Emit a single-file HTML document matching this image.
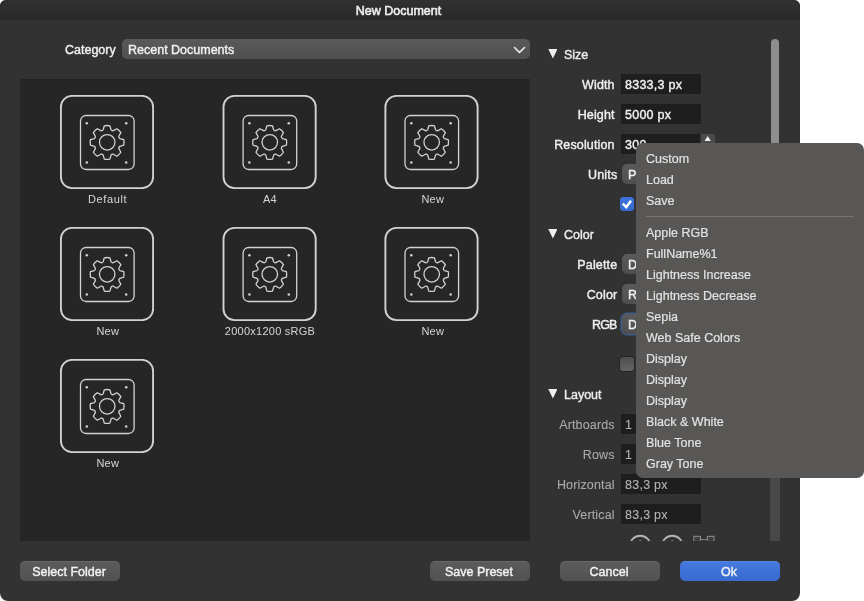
<!DOCTYPE html>
<html><head><meta charset="utf-8"><title>New Document</title>
<style>
*{box-sizing:border-box;margin:0;padding:0}
html,body{width:864px;height:601px;background:#fff;overflow:hidden}
body{position:relative;font-family:"Liberation Sans",sans-serif;font-size:12px;color:#e6e6e6;-webkit-font-smoothing:antialiased;-webkit-text-stroke:.4px currentColor}
.abs{position:absolute}
#win{will-change:transform;position:absolute;left:0;top:0;width:800px;height:601px;background:#323232;border-radius:6px 6px 8px 8px;overflow:hidden}
#title{position:absolute;left:0;top:0;width:800px;height:20px;background:linear-gradient(#313131,#282828);text-align:center;font-weight:normal;font-size:12.5px;line-height:23px;color:#ececec;-webkit-text-stroke:.6px;padding-right:3px}
.lbl{position:absolute;white-space:nowrap;line-height:22px;height:20px;font-size:12.5px;color:#f0f0f0}
.r{text-align:right;width:200px;margin-left:-.3px;letter-spacing:.15px}
.dim{color:#a9a9a9;-webkit-text-stroke:.1px}
.field{position:absolute;background:#1e1e1e;height:20px;line-height:22px;padding-left:4px;font-size:12.5px;color:#f0f0f0;white-space:nowrap;overflow:hidden;letter-spacing:.25px}
.dimf{color:#b4b4b4;-webkit-text-stroke:.1px}
.pop{position:absolute;background:linear-gradient(#5a5a5a,#4f4f4f);height:20px;border-radius:5px;line-height:22px;padding-left:6px;font-size:12.5px;color:#f0f0f0;white-space:nowrap;overflow:hidden}
.btn{position:absolute;width:100px;height:20px;border-radius:5px;background:linear-gradient(#5b5b5b,#515151);padding-right:2px;text-align:center;line-height:22px;font-size:12.5px;color:#f2f2f2;top:561px;box-shadow:inset 0 1px 0 rgba(255,255,255,.08)}
#panel{position:absolute;left:20px;top:79px;width:510px;height:462px;background:#262626;box-shadow:inset 1px 1px 0 #232323}
.th{position:absolute;width:94px;height:94px}
.tl{position:absolute;width:160px;text-align:center;font-size:11px;line-height:14px;color:#d6d6d6;letter-spacing:.25px;-webkit-text-stroke:0}
.hd{position:absolute;-webkit-text-stroke:.4px;font-size:12.5px;line-height:22px;color:#ececec;white-space:nowrap}
.tri{position:absolute;width:9.2px;height:9.6px;background:#f0f0f0;clip-path:polygon(0 0,100% 0,50% 100%);margin-left:.3px}
#menu{will-change:transform;position:absolute;left:636px;top:143px;width:228px;height:335px;background:#585755;border-radius:7px;}
.mi{position:absolute;left:10px;font-size:12.5px;line-height:23px;height:21px;color:#e2e2e2;white-space:nowrap;-webkit-text-stroke:.2px}
.sep{position:absolute;left:10px;right:10px;top:73px;height:1px;background:#777574}
.cb{position:absolute;width:14px;height:14px;border-radius:3.5px}
</style></head><body>
<div id="win">
  <div id="title">New Document</div>

  <div class="lbl" style="left:65px;top:39px">Category</div>
  <div class="pop" style="left:122px;top:39px;width:408px">Recent Documents
    <svg class="abs" style="right:4.3px;top:5.7px" width="13" height="10" viewBox="0 0 13 10"><path d="M1.5 2.5 L6.5 7.5 L11.5 2.5" fill="none" stroke="#eee" stroke-width="1.6" stroke-linecap="round" stroke-linejoin="round"/></svg>
  </div>

  <div id="panel"></div>

  <!-- thumbnails -->
  <svg width="0" height="0" style="position:absolute">
    <defs>
      <g id="thumb" fill="none" stroke="#d2d2d2">
        <rect x="0.9" y="0.9" width="92.2" height="92.2" rx="11" stroke-width="1.9"/>
        <rect x="20.5" y="20.5" width="53.6" height="54" rx="5.5" stroke-width="1.3"/>
        <circle cx="26.8" cy="28.2" r="1.3" fill="#cfcfcf" stroke="none"/>
        <circle cx="66.2" cy="28.2" r="1.3" fill="#cfcfcf" stroke="none"/>
        <circle cx="26.8" cy="67.5" r="1.3" fill="#cfcfcf" stroke="none"/>
        <circle cx="66.2" cy="67.5" r="1.3" fill="#cfcfcf" stroke="none"/>
        <circle cx="47.2" cy="47.3" r="7.75" stroke-width="1.3"/>
        <path d="M43.17 34.74 L44.32 30.78 Q47.10 30.20 49.88 30.78 L51.03 34.74 Q51.85 35.99 53.31 35.69 L56.92 33.70 Q59.30 35.25 60.85 37.63 L58.86 41.24 Q58.56 42.70 59.81 43.52 L63.77 44.67 Q64.35 47.45 63.77 50.23 L59.81 51.38 Q58.56 52.20 58.86 53.66 L60.85 57.27 Q59.30 59.65 56.92 61.20 L53.31 59.21 Q51.85 58.91 51.03 60.16 L49.88 64.12 Q47.10 64.70 44.32 64.12 L43.17 60.16 Q42.35 58.91 40.89 59.21 L37.28 61.20 Q34.90 59.65 33.35 57.27 L35.34 53.66 Q35.64 52.20 34.39 51.38 L30.43 50.23 Q29.85 47.45 30.43 44.67 L34.39 43.52 Q35.64 42.70 35.34 41.24 L33.35 37.63 Q34.90 35.25 37.28 33.70 L40.89 35.69 Q42.35 35.99 43.17 34.74Z" stroke-width="1.3" stroke-linejoin="round"/>
      </g>
    </defs>
  </svg>
  <svg class="th" style="left:60px;top:95px" viewBox="0 0 94 94"><use href="#thumb"/></svg>
  <svg class="th" style="left:223px;top:95px;overflow:visible" viewBox="0.4 0 94 94"><use href="#thumb"/></svg>
  <svg class="th" style="left:385px;top:95px;overflow:visible" viewBox="0.5 0 94 94"><use href="#thumb"/></svg>
  <svg class="th" style="left:60px;top:227px" viewBox="0 0 94 94"><use href="#thumb"/></svg>
  <svg class="th" style="left:223px;top:227px;overflow:visible" viewBox="0.4 0 94 94"><use href="#thumb"/></svg>
  <svg class="th" style="left:385px;top:227px;overflow:visible" viewBox="0.5 0 94 94"><use href="#thumb"/></svg>
  <svg class="th" style="left:60px;top:359px" viewBox="0 0 94 94"><use href="#thumb"/></svg>
  <div class="tl" style="left:27.6px;top:192px;letter-spacing:.6px">Default</div>
  <div class="tl" style="left:190px;top:192px">A4</div>
  <div class="tl" style="left:352.8px;top:192px">New</div>
  <div class="tl" style="left:27.8px;top:324px">New</div>
  <div class="tl" style="left:190px;top:324px">2000x1200 sRGB</div>
  <div class="tl" style="left:352.8px;top:324px">New</div>
  <div class="tl" style="left:27.8px;top:456px">New</div>

  <!-- right side -->
  <div class="tri" style="left:548px;top:49px"></div><div class="hd" style="left:564px;top:44px">Size</div>
  <div class="lbl r" style="left:415px;top:74px">Width</div><div class="field" style="left:621px;top:74px;width:80px">8333,3 px</div>
  <div class="lbl r" style="left:415px;top:104px">Height</div><div class="field" style="left:621px;top:104px;width:80px">5000 px</div>
  <div class="lbl r" style="left:415px;top:134px">Resolution</div><div class="field" style="left:621px;top:134px;width:79px">300</div>
  <div class="abs" style="left:700.5px;top:134px;width:14.5px;height:20px;background:#4b4b4b;border-radius:0 3px 3px 0"></div>
  <div class="abs" style="left:704.4px;top:136px;width:6.6px;height:5.2px;background:#f0f0f0;clip-path:polygon(50% 0,100% 100%,0 100%)"></div>
  <div class="lbl r" style="left:417.6px;top:164px">Units</div><div class="pop" style="left:622px;top:164px;width:80px">P</div>
  <div class="cb" style="left:620px;top:197px;background:linear-gradient(#3e74dc,#3468d0)"></div>
  <svg class="abs" style="left:620px;top:197px" width="14" height="14" viewBox="0 0 14 14"><path d="M2.7 6.6 L6.3 10.2 L11 3.7" fill="none" stroke="#fff" stroke-width="2.5" stroke-linecap="butt" stroke-linejoin="miter"/></svg>

  <div class="tri" style="left:548px;top:229px"></div><div class="hd" style="left:564px;top:224px">Color</div>
  <div class="lbl r" style="left:417.6px;top:254px">Palette</div><div class="pop" style="left:622px;top:254px;width:80px">D</div>
  <div class="lbl r" style="left:417.6px;top:284px">Color</div><div class="pop" style="left:622px;top:284px;width:80px">R</div>
  <div class="lbl r" style="left:417.6px;top:314px;letter-spacing:-.9px;padding-right:.9px">RGB</div><div class="pop" style="left:622px;top:314px;width:80px;box-shadow:0 0 0 1.5px #3a5c8e">D</div>
  <div class="cb" style="left:620px;top:357px;background:linear-gradient(#4e4e4e,#646464);box-shadow:0 0 0 1px rgba(0,0,0,.28)"></div>

  <div class="tri" style="left:548px;top:389px"></div><div class="hd" style="left:564px;top:384px">Layout</div>
  <div class="lbl r dim" style="left:415px;top:414px">Artboards</div><div class="field dimf" style="left:621px;top:414px;width:80px">1</div>
  <div class="lbl r dim" style="left:415px;top:444px">Rows</div><div class="field dimf" style="left:621px;top:444px;width:80px">1</div>
  <div class="lbl r dim" style="left:415px;top:474px">Horizontal</div><div class="field dimf" style="left:621px;top:474px;width:80px">83,3 px</div>
  <div class="lbl r dim" style="left:415px;top:504px">Vertical</div><div class="field dimf" style="left:621px;top:504px;width:80px">83,3 px</div>

  <!-- clipped icons -->
  <svg class="abs" style="left:620px;top:533px" width="100" height="8" viewBox="0 0 100 8">
    <circle cx="20.2" cy="12.9" r="10.2" fill="none" stroke="#b4b4b4" stroke-width="1.9"/>
    <circle cx="52.3" cy="12.9" r="10.2" fill="none" stroke="#b4b4b4" stroke-width="1.9"/>
    <rect x="19.4" y="7.3" width="1.6" height="2" fill="#b4b4b4"/>
    <rect x="51.5" y="7.3" width="1.6" height="2" fill="#b4b4b4"/>
    <rect x="73.8" y="3.3" width="6.7" height="9" fill="#3f3f3f" stroke="#8e8e8e" stroke-width="1"/>
    <rect x="87.3" y="3.3" width="6.7" height="9" fill="#3f3f3f" stroke="#8e8e8e" stroke-width="1"/>
    <rect x="81" y="6" width="6" height="1" fill="#7c7c7c"/>
  </svg>

  <!-- scrollbar -->
  <div class="abs" style="left:770px;top:300px;width:10px;height:241px;background:#484848"></div>
  <div class="abs" style="left:771px;top:39px;width:8px;height:270px;background:#8e8e8e;border-radius:4px"></div>

  <div class="btn" style="left:20px">Select Folder</div>
  <div class="btn" style="left:430px">Save Preset</div>
  <div class="btn" style="left:560px">Cancel</div>
  <div class="btn" style="left:680px;background:linear-gradient(#457ade,#386ad0)">Ok</div>
</div>

<div id="menu">
  <div class="mi" style="top:5px">Custom</div>
  <div class="mi" style="top:26px">Load</div>
  <div class="mi" style="top:47px">Save</div>
  <div class="sep"></div>
  <div class="mi" style="top:79px">Apple RGB</div>
  <div class="mi" style="top:100px">FullName%1</div>
  <div class="mi" style="top:121px">Lightness Increase</div>
  <div class="mi" style="top:142px">Lightness Decrease</div>
  <div class="mi" style="top:163px">Sepia</div>
  <div class="mi" style="top:184px">Web Safe Colors</div>
  <div class="mi" style="top:205px">Display</div>
  <div class="mi" style="top:226px">Display</div>
  <div class="mi" style="top:247px">Display</div>
  <div class="mi" style="top:268px">Black &amp; White</div>
  <div class="mi" style="top:289px">Blue Tone</div>
  <div class="mi" style="top:310px">Gray Tone</div>
</div>
</body></html>
